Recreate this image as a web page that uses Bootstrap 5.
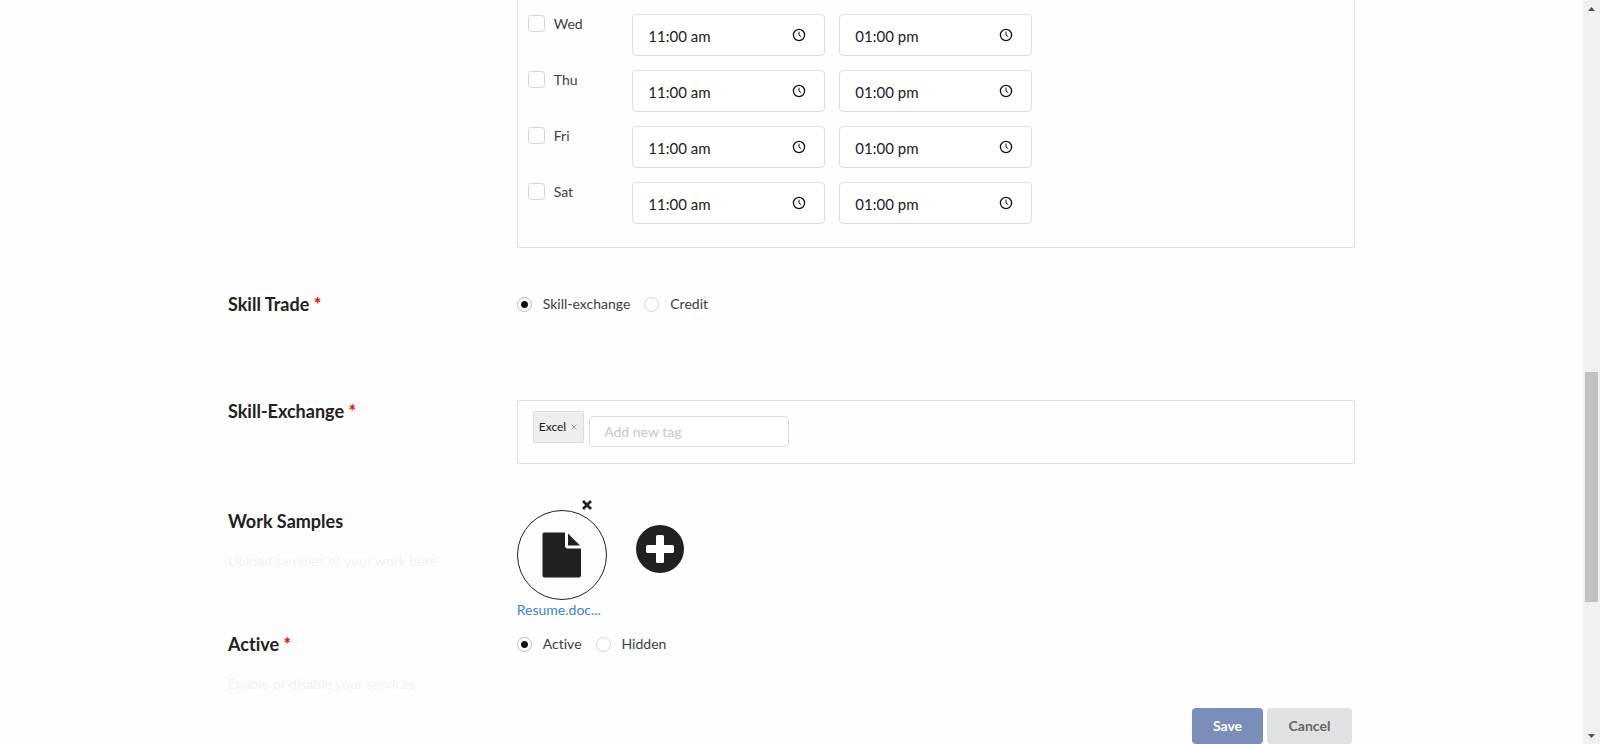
<!DOCTYPE html>
<html lang="en">
<head>
<meta charset="utf-8">
<meta name="viewport" content="width=device-width, initial-scale=1">
<title>Share Skill</title>
<link href="https://cdn.jsdelivr.net/npm/bootstrap@5.3.0/dist/css/bootstrap.min.css" rel="stylesheet">
<style>
  body { font-family: Lato, "Liberation Sans", sans-serif; font-size: 14px; line-height: 20px; color: #212121; background: #fefefe; font-variant-ligatures: none; }
  .page-wrap { max-width: 1155px; --bs-gutter-x: 28px; }
  .form-row { --bs-gutter-x: 28px; }
  .gap-trade { margin-top: 45px; }
  .gap-exchange { margin-top: 85px; }
  .gap-samples { margin-top: 46px; }
  .gap-active { margin-top: 13px; }
  .field-title { font-size: 18px; line-height: 22px; font-weight: 700; margin: 0; }
  .req { color: #f00; }
  .hint { color: #f2f2f2; margin: 19px 0 0; }
  .panel { border: 1px solid #e2e2e3; }
  .days { border-top: 0; padding: 14px 4px 9px; }
  .day-row { --bs-gutter-x: 14px; margin: 0 0 14px; }
  .day-name { width: 12.5%; padding: 0 6px; gap: 9px; }
  .form-check-input { border-color: #d4d4d5; background-color: #fff; margin: 0; flex: none; }
  .day-check { width: 17px; height: 17px; border-radius: 3px; margin-top: 1px; }
  .day-row label, .choice label { color: #3d3d3d; }
  .form-control { border-color: #dededf; border-radius: 4px; font-size: 14px; color: #212121; background: #fff; }
  .time-box { height: 42px; padding: 2px 36px 0 15px; font-size: 15px; }
  .clock { right: 25px; top: 13px; }
  .choices { gap: 14px; }
  .choice { gap: 11px; height: 22px; }
  .choice .form-check-input { width: 15px; height: 15px; }
  .form-check-input[type=radio]:checked { border-color: #b4bcc4; background-color: #fff;
    background-image: radial-gradient(circle, #111 0 3px, transparent 4px); }
  .tags { height: 64px; padding: 10px 15px; }
  .tag { height: 32px; padding: 0 5px; margin-right: 5px; background: #eee; border: 1px solid #dcdcdc; border-radius: 2px; font-size: 12px; }
  .plain { border: 0; background: none; padding: 0; color: inherit; line-height: 1; display: block; }
  .tag .plain { color: #a0a0a0; }
  .tag-box { width: 200px; height: 31px; padding: 0 14px; margin-top: 5px; }
  .tag-box::placeholder { color: #c7c7c8; }
  .doc { width: 90px; height: 90px; border: 1px solid #212121; border-radius: 50%; }
  .doc-remove { right: 15px; top: -10px; }
  .doc-link { color: #4183c4; }
  .add { margin: 15px 0 0 29px; }
  .actions { margin-top: 14px; padding-right: 3px; }
  .act { height: 36px; padding: 0; border: 0; border-radius: 4px; font-size: 14px; font-weight: 700; }
  .save { min-width: 71px; background: #7b8eba; color: #fff; }
  .cancel { min-width: 85px; background: #e0e1e2; color: #666; }
  .scroller { width: 17px; background: #f0f0f0; }
  .thumb-gap { height: 50%; }
  .thumb { height: 32%; width: 13px; background: #c1c1c1; }
</style>
</head>
<body>
<div class="d-flex vh-100 overflow-hidden">
<main class="flex-grow-1">
<form class="container page-wrap">
  <div class="row form-row">
    <div class="col-9 offset-3">
      <div class="panel days">
        <div class="row day-row">
          <div class="day-name d-flex"><input class="form-check-input day-check" type="checkbox" id="wed"><label for="wed">Wed</label></div>
          <div class="col-3 position-relative"><input class="form-control time-box" type="text" value="11:00 am" aria-label="Wed start"><svg class="clock position-absolute" width="16" height="16" viewBox="0 0 16 16" fill="none" stroke="#111" stroke-width="1.3"><circle cx="8" cy="8" r="5.6"/><path d="M8 4.7V8.2L10.2 9.600" stroke-width="1"/></svg></div>
          <div class="col-3 position-relative"><input class="form-control time-box" type="text" value="01:00 pm" aria-label="Wed end"><svg class="clock position-absolute" width="16" height="16" viewBox="0 0 16 16" fill="none" stroke="#111" stroke-width="1.3"><circle cx="8" cy="8" r="5.6"/><path d="M8 4.7V8.2L10.2 9.600" stroke-width="1"/></svg></div>
        </div>
        <div class="row day-row">
          <div class="day-name d-flex"><input class="form-check-input day-check" type="checkbox" id="thu"><label for="thu">Thu</label></div>
          <div class="col-3 position-relative"><input class="form-control time-box" type="text" value="11:00 am" aria-label="Thu start"><svg class="clock position-absolute" width="16" height="16" viewBox="0 0 16 16" fill="none" stroke="#111" stroke-width="1.3"><circle cx="8" cy="8" r="5.6"/><path d="M8 4.7V8.2L10.2 9.600" stroke-width="1"/></svg></div>
          <div class="col-3 position-relative"><input class="form-control time-box" type="text" value="01:00 pm" aria-label="Thu end"><svg class="clock position-absolute" width="16" height="16" viewBox="0 0 16 16" fill="none" stroke="#111" stroke-width="1.3"><circle cx="8" cy="8" r="5.6"/><path d="M8 4.7V8.2L10.2 9.600" stroke-width="1"/></svg></div>
        </div>
        <div class="row day-row">
          <div class="day-name d-flex"><input class="form-check-input day-check" type="checkbox" id="fri"><label for="fri">Fri</label></div>
          <div class="col-3 position-relative"><input class="form-control time-box" type="text" value="11:00 am" aria-label="Fri start"><svg class="clock position-absolute" width="16" height="16" viewBox="0 0 16 16" fill="none" stroke="#111" stroke-width="1.3"><circle cx="8" cy="8" r="5.6"/><path d="M8 4.7V8.2L10.2 9.600" stroke-width="1"/></svg></div>
          <div class="col-3 position-relative"><input class="form-control time-box" type="text" value="01:00 pm" aria-label="Fri end"><svg class="clock position-absolute" width="16" height="16" viewBox="0 0 16 16" fill="none" stroke="#111" stroke-width="1.3"><circle cx="8" cy="8" r="5.6"/><path d="M8 4.7V8.2L10.2 9.600" stroke-width="1"/></svg></div>
        </div>
        <div class="row day-row">
          <div class="day-name d-flex"><input class="form-check-input day-check" type="checkbox" id="sat"><label for="sat">Sat</label></div>
          <div class="col-3 position-relative"><input class="form-control time-box" type="text" value="11:00 am" aria-label="Sat start"><svg class="clock position-absolute" width="16" height="16" viewBox="0 0 16 16" fill="none" stroke="#111" stroke-width="1.3"><circle cx="8" cy="8" r="5.6"/><path d="M8 4.7V8.2L10.2 9.600" stroke-width="1"/></svg></div>
          <div class="col-3 position-relative"><input class="form-control time-box" type="text" value="01:00 pm" aria-label="Sat end"><svg class="clock position-absolute" width="16" height="16" viewBox="0 0 16 16" fill="none" stroke="#111" stroke-width="1.3"><circle cx="8" cy="8" r="5.6"/><path d="M8 4.7V8.2L10.2 9.600" stroke-width="1"/></svg></div>
        </div>
      </div>
    </div>
  </div>

  <div class="row form-row gap-trade">
    <div class="col-3"><h3 class="field-title">Skill Trade <span class="req">*</span></h3></div>
    <div class="col-9 d-flex choices">
      <div class="choice d-flex align-items-center"><input class="form-check-input" type="radio" name="trade" id="exchange" checked><label for="exchange">Skill-exchange</label></div>
      <div class="choice d-flex align-items-center"><input class="form-check-input" type="radio" name="trade" id="credit"><label for="credit">Credit</label></div>
    </div>
  </div>

  <div class="row form-row gap-exchange">
    <div class="col-3"><h3 class="field-title">Skill-Exchange <span class="req">*</span></h3></div>
    <div class="col-9">
      <div class="panel tags d-flex align-items-start">
        <span class="tag d-flex align-items-center gap-1">Excel <button class="plain" type="button" aria-label="Remove Excel"><svg class="d-block" width="8" height="8" viewBox="0 0 8 8" stroke="currentColor"><path d="M1.500 1.500L6.500 6.500M6.500 1.500L1.500 6.500"/></svg></button></span>
        <input class="form-control tag-box" type="text" placeholder="Add new tag" aria-label="Add new tag">
      </div>
    </div>
  </div>

  <div class="row form-row gap-samples">
    <div class="col-3"><h3 class="field-title">Work Samples</h3><p class="hint">Upload samples of your work here</p></div>
    <div class="col-9 d-flex align-items-start">
      <div class="position-relative">
        <div class="doc d-flex align-items-center justify-content-center"><svg width="40" height="46" viewBox="0 0 40 46" fill="#212121"><path d="M2 0.5H23V14Q23 16.500 25.500 16.500H39V43.500Q39 45.500 37 45.500H2.500Q.5 45.500 .5 43.500V2Q.5.5 2 .5Z"/><path d="M26 1.500L38 13.500H26Z"/></svg></div>
        <button class="plain doc-remove position-absolute" type="button" aria-label="Remove file"><svg class="d-block" width="10" height="10" viewBox="0 0 10 10" stroke="#212121" stroke-width="2.800"><path d="M1 1L9 9M9 1L1 9"/></svg></button>
        <a class="doc-link text-decoration-none" href="#">Resume.doc...</a>
      </div>
      <button class="plain add" type="button" aria-label="Add file"><svg class="d-block" width="48" height="48" viewBox="0 0 48 48"><circle cx="24" cy="24" r="24" fill="#212121"/><g fill="#fff"><rect x="20" y="10" width="8" height="28" rx="1.500"/><rect x="10" y="20" width="28" height="8" rx="1.500"/></g></svg></button>
    </div>
  </div>

  <div class="row form-row gap-active">
    <div class="col-3"><h3 class="field-title">Active <span class="req">*</span></h3><p class="hint">Enable or disable your services.</p></div>
    <div class="col-9 d-flex choices">
      <div class="choice d-flex align-items-center"><input class="form-check-input" type="radio" name="state" id="active" checked><label for="active">Active</label></div>
      <div class="choice d-flex align-items-center"><input class="form-check-input" type="radio" name="state" id="hidden"><label for="hidden">Hidden</label></div>
    </div>
  </div>

  <div class="actions d-flex justify-content-end gap-1">
    <button class="act save" type="button">Save</button>
    <button class="act cancel" type="button">Cancel</button>
  </div>
</form>
</main>
<div class="scroller d-flex flex-column align-items-center flex-shrink-0 py-1" aria-hidden="true">
  <svg width="9" height="9" viewBox="0 0 9 9" fill="#505050"><path d="M1 7L4.500 3L8 7Z"/></svg>
  <div class="flex-grow-1 d-flex flex-column align-items-center w-100"><div class="thumb-gap"></div><div class="thumb"></div></div>
  <svg width="9" height="9" viewBox="0 0 9 9" fill="#505050"><path d="M1 3L4.500 7L8 3Z"/></svg>
</div>
</div>
<script src="https://cdn.jsdelivr.net/npm/bootstrap@5.3.0/dist/js/bootstrap.bundle.min.js"></script>
</body>
</html>
